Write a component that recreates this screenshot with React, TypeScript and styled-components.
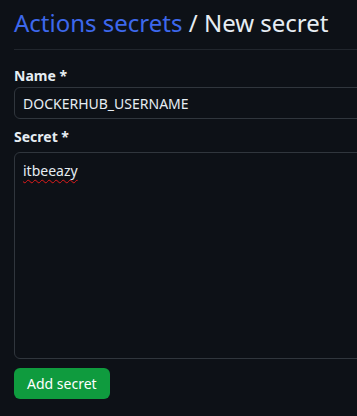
import React from "react";
import styled, { createGlobalStyle } from "styled-components";

const GlobalStyle = createGlobalStyle`
  html, body {
    margin: 0;
    padding: 0;
    background: #0d1117;
    overflow: hidden;
  }
  body {
    font-family: "Noto Sans", "Open Sans", sans-serif;
    color: #e6edf3;
  }
`;

const Page = styled.main`
  width: 460px;
  padding: 5px 0 0 14px;
  box-sizing: border-box;
`;

const Header = styled.div`
  padding-bottom: 8px;
  border-bottom: 1px solid #21262d;
`;

const Title = styled.h1`
  margin: 0;
  font-size: 24px;
  font-weight: 400;
  line-height: 36px;
  color: #e6edf3;
`;

const Crumb = styled.a`
  color: #3d68ec;
  text-decoration: none;
`;

const Form = styled.form`
  display: flex;
  flex-direction: column;
  padding-top: 16px;
`;

const Field = styled.div<{ $gap: number }>`
  display: flex;
  flex-direction: column;
  gap: ${(p) => p.$gap}px;
  margin-bottom: 8px;
`;

const Label = styled.label`
  font-size: 14px;
  font-weight: 700;
  line-height: 20px;
  color: #e6edf3;
`;

const TextInput = styled.input`
  height: 32px;
  box-sizing: border-box;
  padding: 5px 8px;
  font-family: inherit;
  font-size: 14px;
  line-height: 20px;
  color: #e6edf3;
  background: #0d1117;
  border: 1px solid #30363d;
  border-radius: 6px;
  outline: none;
`;

const TextArea = styled.div`
  height: 207px;
  box-sizing: border-box;
  padding: 8px;
  font-size: 14px;
  line-height: 20px;
  color: #e6edf3;
  background: #0d1117;
  border: 1px solid #30363d;
  border-radius: 6px;
`;

const Misspelled = styled.span`
  text-decoration: underline wavy #e01b1b;
  text-decoration-thickness: 1px;
  text-underline-offset: 3px;
`;

const SubmitButton = styled.button`
  align-self: flex-start;
  height: 31px;
  padding: 0 13px;
  margin-top: 1px;
  font-family: inherit;
  font-size: 14px;
  line-height: 20px;
  color: #ffffff;
  background: #0f9b3e;
  border: none;
  border-radius: 6px;
  cursor: pointer;
`;

export default function App() {
  return (
    <>
      <GlobalStyle />
      <Page>
        <Header>
          <Title>
            <Crumb href="#">Actions secrets</Crumb> / New secret
          </Title>
        </Header>
        <Form onSubmit={(e) => e.preventDefault()}>
          <Field $gap={1}>
            <Label htmlFor="secret-name">Name *</Label>
            <TextInput id="secret-name" defaultValue="DOCKERHUB_USERNAME" />
          </Field>
          <Field $gap={5}>
            <Label>Secret *</Label>
            <TextArea role="textbox" aria-multiline="true">
              <Misspelled>itbeeazy</Misspelled>
            </TextArea>
          </Field>
          <SubmitButton type="submit">Add secret</SubmitButton>
        </Form>
      </Page>
    </>
  );
}
